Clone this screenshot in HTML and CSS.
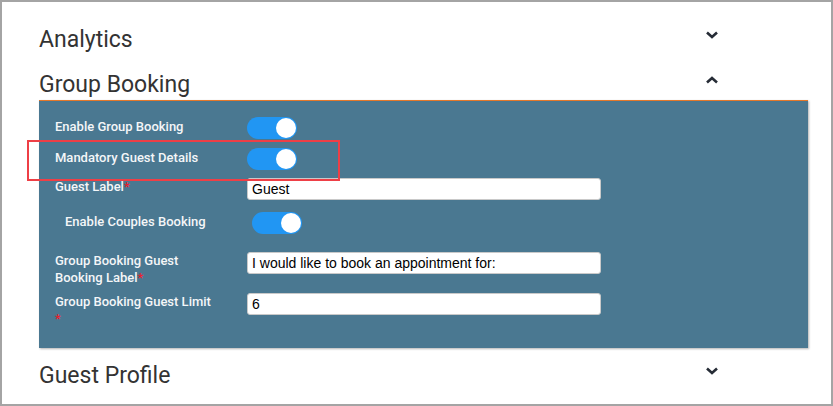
FILE: index.html
```html
<!DOCTYPE html>
<html lang="en">
<head>
    <meta charset="UTF-8">
    <meta name="viewport" content="width=device-width, initial-scale=1.0">
    <title>Group Booking Settings</title>
    <link rel="stylesheet" href="styles.css">
</head>
<body>

<div class="frame">
    <div class="section-head first">
        <span>Analytics</span>
        <svg class="chevron" width="12" height="8" viewBox="0 0 12 8"><polyline points="1,1.5 6,6 11,1.5" /></svg>
    </div>

    <div class="section-head">
        <span>Group Booking</span>
        <svg class="chevron" width="12" height="8" viewBox="0 0 12 8"><polyline points="1,6.5 6,2 11,6.5" /></svg>
    </div>

    <div class="panel">
        <div class="row row-1">
            <label class="field-label">Enable Group Booking</label>
            <div class="toggle"><span class="knob"></span></div>
        </div>
        <div class="row row-2">
            <label class="field-label">Mandatory Guest Details</label>
            <div class="toggle"><span class="knob"></span></div>
        </div>
        <div class="row row-3">
            <label class="field-label text">Guest Label<span class="req">*</span></label>
            <input class="text-input" type="text" value="Guest">
        </div>
        <div class="row row-4 indented">
            <label class="field-label">Enable Couples Booking</label>
            <div class="toggle"><span class="knob"></span></div>
        </div>
        <div class="row row-5">
            <label class="field-label text">Group Booking Guest Booking Label<span class="req">*</span></label>
            <input class="text-input" type="text" value="I would like to book an appointment for:">
        </div>
        <div class="row row-6">
            <label class="field-label text">Group Booking Guest Limit <span class="req">*</span></label>
            <input class="text-input" type="text" value="6">
        </div>
    </div>

    <div class="section-head last">
        <span>Guest Profile</span>
        <svg class="chevron" width="12" height="8" viewBox="0 0 12 8"><polyline points="1,1.5 6,6 11,1.5" /></svg>
    </div>

    <!-- annotation highlight -->
    <div class="highlight"></div>
</div>

</body>
</html>
```

FILE: styles.css
```css
body {
    margin: 0;
    background-color: #ffffff;
    font-family: Roboto, "Liberation Sans", Arial, sans-serif;
}
.frame {
    position: relative;
    width: 833px;
    height: 406px;
    box-sizing: border-box;
    border: 2px solid #a4a4a4;
    overflow: hidden;
}
.section-head {
    display: flex;
    justify-content: space-between;
    align-items: center;
    margin-left: 37px;
    width: 769px;
    box-sizing: border-box;
    padding-top: 2px;
    padding-right: 90px;
    margin-top: 13px;
    font-size: 23px;
    line-height: 30px;
    color: #333333;
}
.section-head.first {
    margin-top: 21px;
}
.section-head.last {
    margin-top: 11px;
}
.chevron {
    margin-bottom: 10px;
}
.chevron polyline {
    fill: none;
    stroke: #262c36;
    stroke-width: 2.6;
    stroke-linecap: butt;
}
.panel {
    margin-left: 37px;
    width: 769px;
    box-sizing: border-box;
    background-color: #4a7891;
    border-top: 1px solid #e5782a;
    box-shadow: 1px 1px 2px rgba(0, 0, 0, 0.3);
    padding: 16px 0 21px 16px;
}
.row {
    display: grid;
    grid-template-columns: 192px 354px;
    align-items: start;
}
.row-2 { margin-top: 9px; }
.row-3 { margin-top: 8px; }
.row-4 { margin-top: 12px; }
.row-5 { margin-top: 18px; }
.row-6 { margin-top: 7px; }
.field-label {
    font-size: 13px;
    font-weight: 500;
    line-height: 17px;
    color: #f4f6f8;
    padding-top: 1px;
    max-width: 160px;
}
.field-label.text {
    padding-top: 0;
}
.req {
    color: #e8202e;
}
.indented .field-label {
    padding-left: 10px;
}
.indented .toggle {
    margin-left: 5px;
}
.toggle {
    width: 50px;
    height: 22px;
    box-sizing: border-box;
    padding: 1px;
    border-radius: 11px;
    background-color: #2196f3;
    display: flex;
    justify-content: flex-end;
}
.knob {
    width: 20px;
    height: 20px;
    border-radius: 50%;
    background-color: #ffffff;
}
.text-input {
    width: 354px;
    height: 22px;
    box-sizing: border-box;
    margin: 0;
    padding: 0 4px;
    border: 1px solid #c9c9c9;
    border-radius: 3px;
    font-family: "Liberation Sans", Arial, sans-serif;
    font-size: 14px;
    color: #000000;
    background-color: #ffffff;
}
.highlight {
    position: absolute;
    left: 25px;
    top: 138px;
    width: 313px;
    height: 41px;
    box-sizing: border-box;
    border: 2px solid #ee3f46;
}
```
